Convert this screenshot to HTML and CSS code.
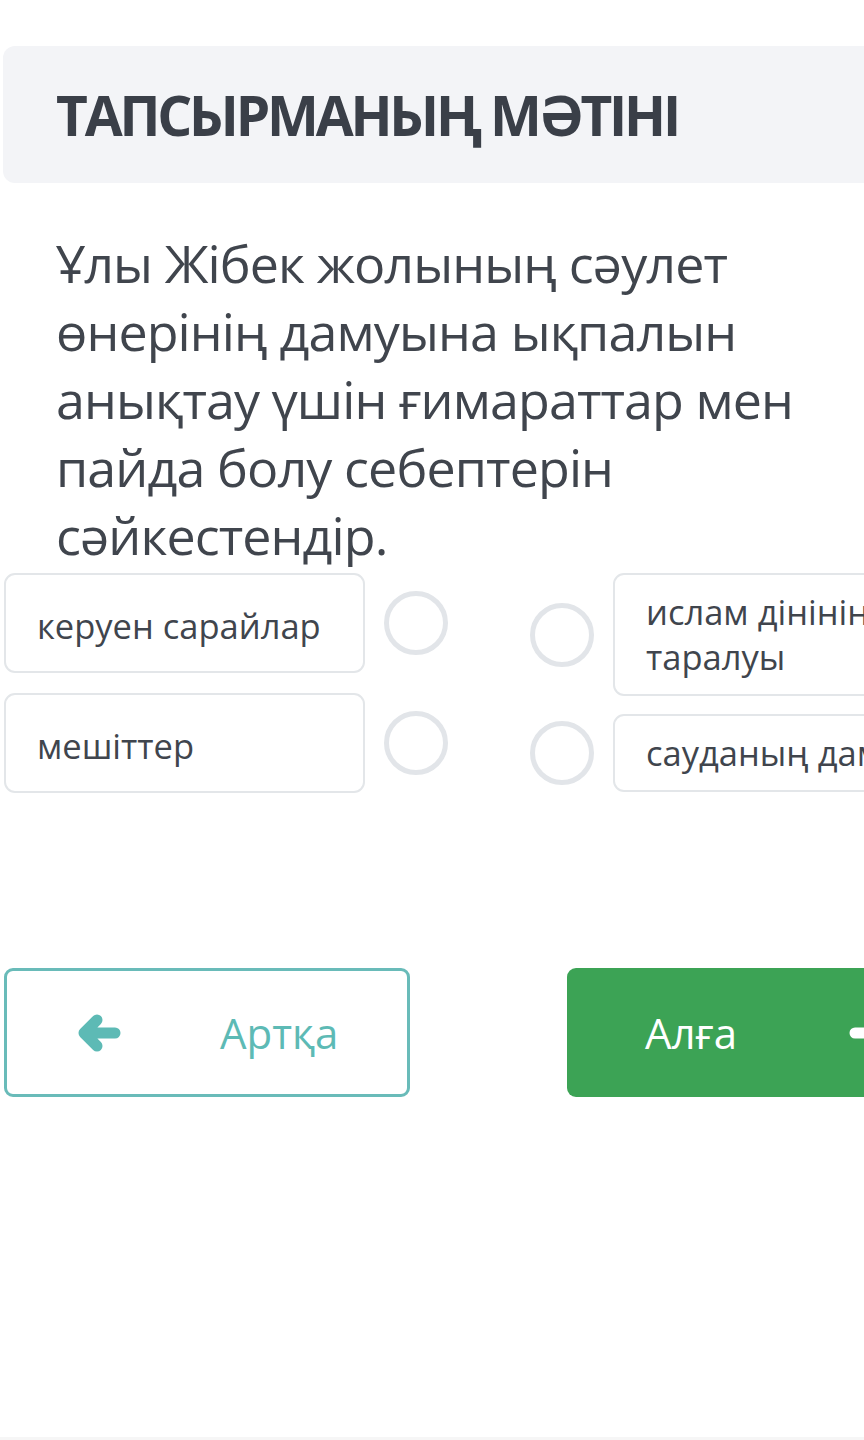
FILE: index.html
```html
<!DOCTYPE html>
<html lang="kk">
<head>
<meta charset="utf-8">
<title>Тапсырма</title>
<link rel="stylesheet" href="styles.css">
</head>
<body>
<div class="page">
  <div class="task-head">
    <h1 class="task-title">ТАПСЫРМАНЫҢ МӘТІНІ</h1>
  </div>
  <p class="question">Ұлы Жібек жолының сәулет өнерінің дамуына ықпалын анықтау үшін ғимараттар мен пайда болу себептерін сәйкестендір.</p>
  <div class="match">
    <div class="side side-left">
      <div class="item">
        <div class="card card-left">керуен сарайлар</div>
        <span class="dot"></span>
      </div>
      <div class="item">
        <div class="card card-left">мешіттер</div>
        <span class="dot"></span>
      </div>
    </div>
    <div class="side side-right">
      <div class="item">
        <span class="dot"></span>
        <div class="card card-right">ислам дінінің<br>таралуы</div>
      </div>
      <div class="item">
        <span class="dot"></span>
        <div class="card card-right">сауданың дамуы</div>
      </div>
    </div>
  </div>
  <div class="nav">
    <button class="btn btn-back">
      <svg class="arrow" viewBox="0 0 46 40" width="46" height="40"><path d="M20 7 L7 20 L20 33 M8 20 H38" fill="none" stroke="currentColor" stroke-width="11" stroke-linecap="round" stroke-linejoin="round"/></svg>
      <span class="btn-label">Артқа</span>
    </button>
    <button class="btn btn-next">
      <span class="btn-label">Алға</span>
      <svg class="arrow" viewBox="0 0 46 40" width="46" height="40"><path d="M26 7 L39 20 L26 33 M38 20 H8" fill="none" stroke="currentColor" stroke-width="11" stroke-linecap="round" stroke-linejoin="round"/></svg>
    </button>
  </div>
</div>
<div class="bottom-line"></div>
</body>
</html>
```

FILE: styles.css
```css
html, body {
  margin: 0;
  padding: 0;
  background: #ffffff;
}
body {
  width: 864px;
  height: 1440px;
  overflow: hidden;
  position: relative;
  font-family: "Open Sans", "Noto Sans", sans-serif;
  color: #3f444c;
}
.page {
  width: 1100px;
  padding-top: 46px;
}
.task-head {
  margin-left: 3px;
  height: 137px;
  background: #f3f4f7;
  border-radius: 12px;
  display: flex;
  align-items: center;
  padding-left: 53px;
}
.task-title {
  margin: 0;
  font-size: 55px;
  font-weight: 700;
  color: #3a3f48;
  letter-spacing: -3.2px;
}
.question {
  margin: 46px 0 0 56px;
  width: 800px;
  font-size: 52px;
  line-height: 68px;
  color: #40454d;
  letter-spacing: -0.9px;
}
.match {
  display: flex;
  margin: 4px 0 0 4px;
  gap: 82px;
}
.side {
  display: flex;
  flex-direction: column;
  gap: 20px;
}
.side-right {
  gap: 18px;
}
.item {
  display: flex;
  align-items: center;
  gap: 19px;
}
.card {
  box-sizing: border-box;
  border: 2px solid #e3e6e9;
  border-radius: 11px;
  font-size: 34.5px;
  line-height: 45px;
  color: #40454d;
  white-space: nowrap;
}
.card-left {
  width: 361px;
  height: 100px;
  display: flex;
  align-items: center;
  padding: 5px 31px 0;
}
.card-right {
  width: 400px;
  padding: 14px 31px 15px;
}
.dot {
  flex: none;
  box-sizing: border-box;
  width: 64px;
  height: 64px;
  border: 5px solid #e2e5e9;
  border-radius: 50%;
}
.nav {
  display: flex;
  gap: 157px;
  margin: 175px 0 0 4px;
}
.btn {
  box-sizing: border-box;
  height: 129px;
  border-radius: 9px;
  font-family: inherit;
  font-size: 42px;
  display: flex;
  align-items: center;
  padding: 0;
  cursor: pointer;
}
.btn-back {
  width: 406px;
  border: 3px solid #69bbb9;
  background: #ffffff;
  color: #5dbab5;
  padding-left: 70px;
}
.btn-back .btn-label {
  margin-left: 97px;
}
.btn-next {
  width: 406px;
  border: none;
  background: #3ca355;
  color: #ffffff;
  padding-left: 78px;
}
.btn-next .arrow {
  margin-left: 110px;
}
.bottom-line {
  position: absolute;
  left: 0;
  right: 0;
  bottom: 0;
  height: 3px;
  background: #f6f6f6;
}
```
